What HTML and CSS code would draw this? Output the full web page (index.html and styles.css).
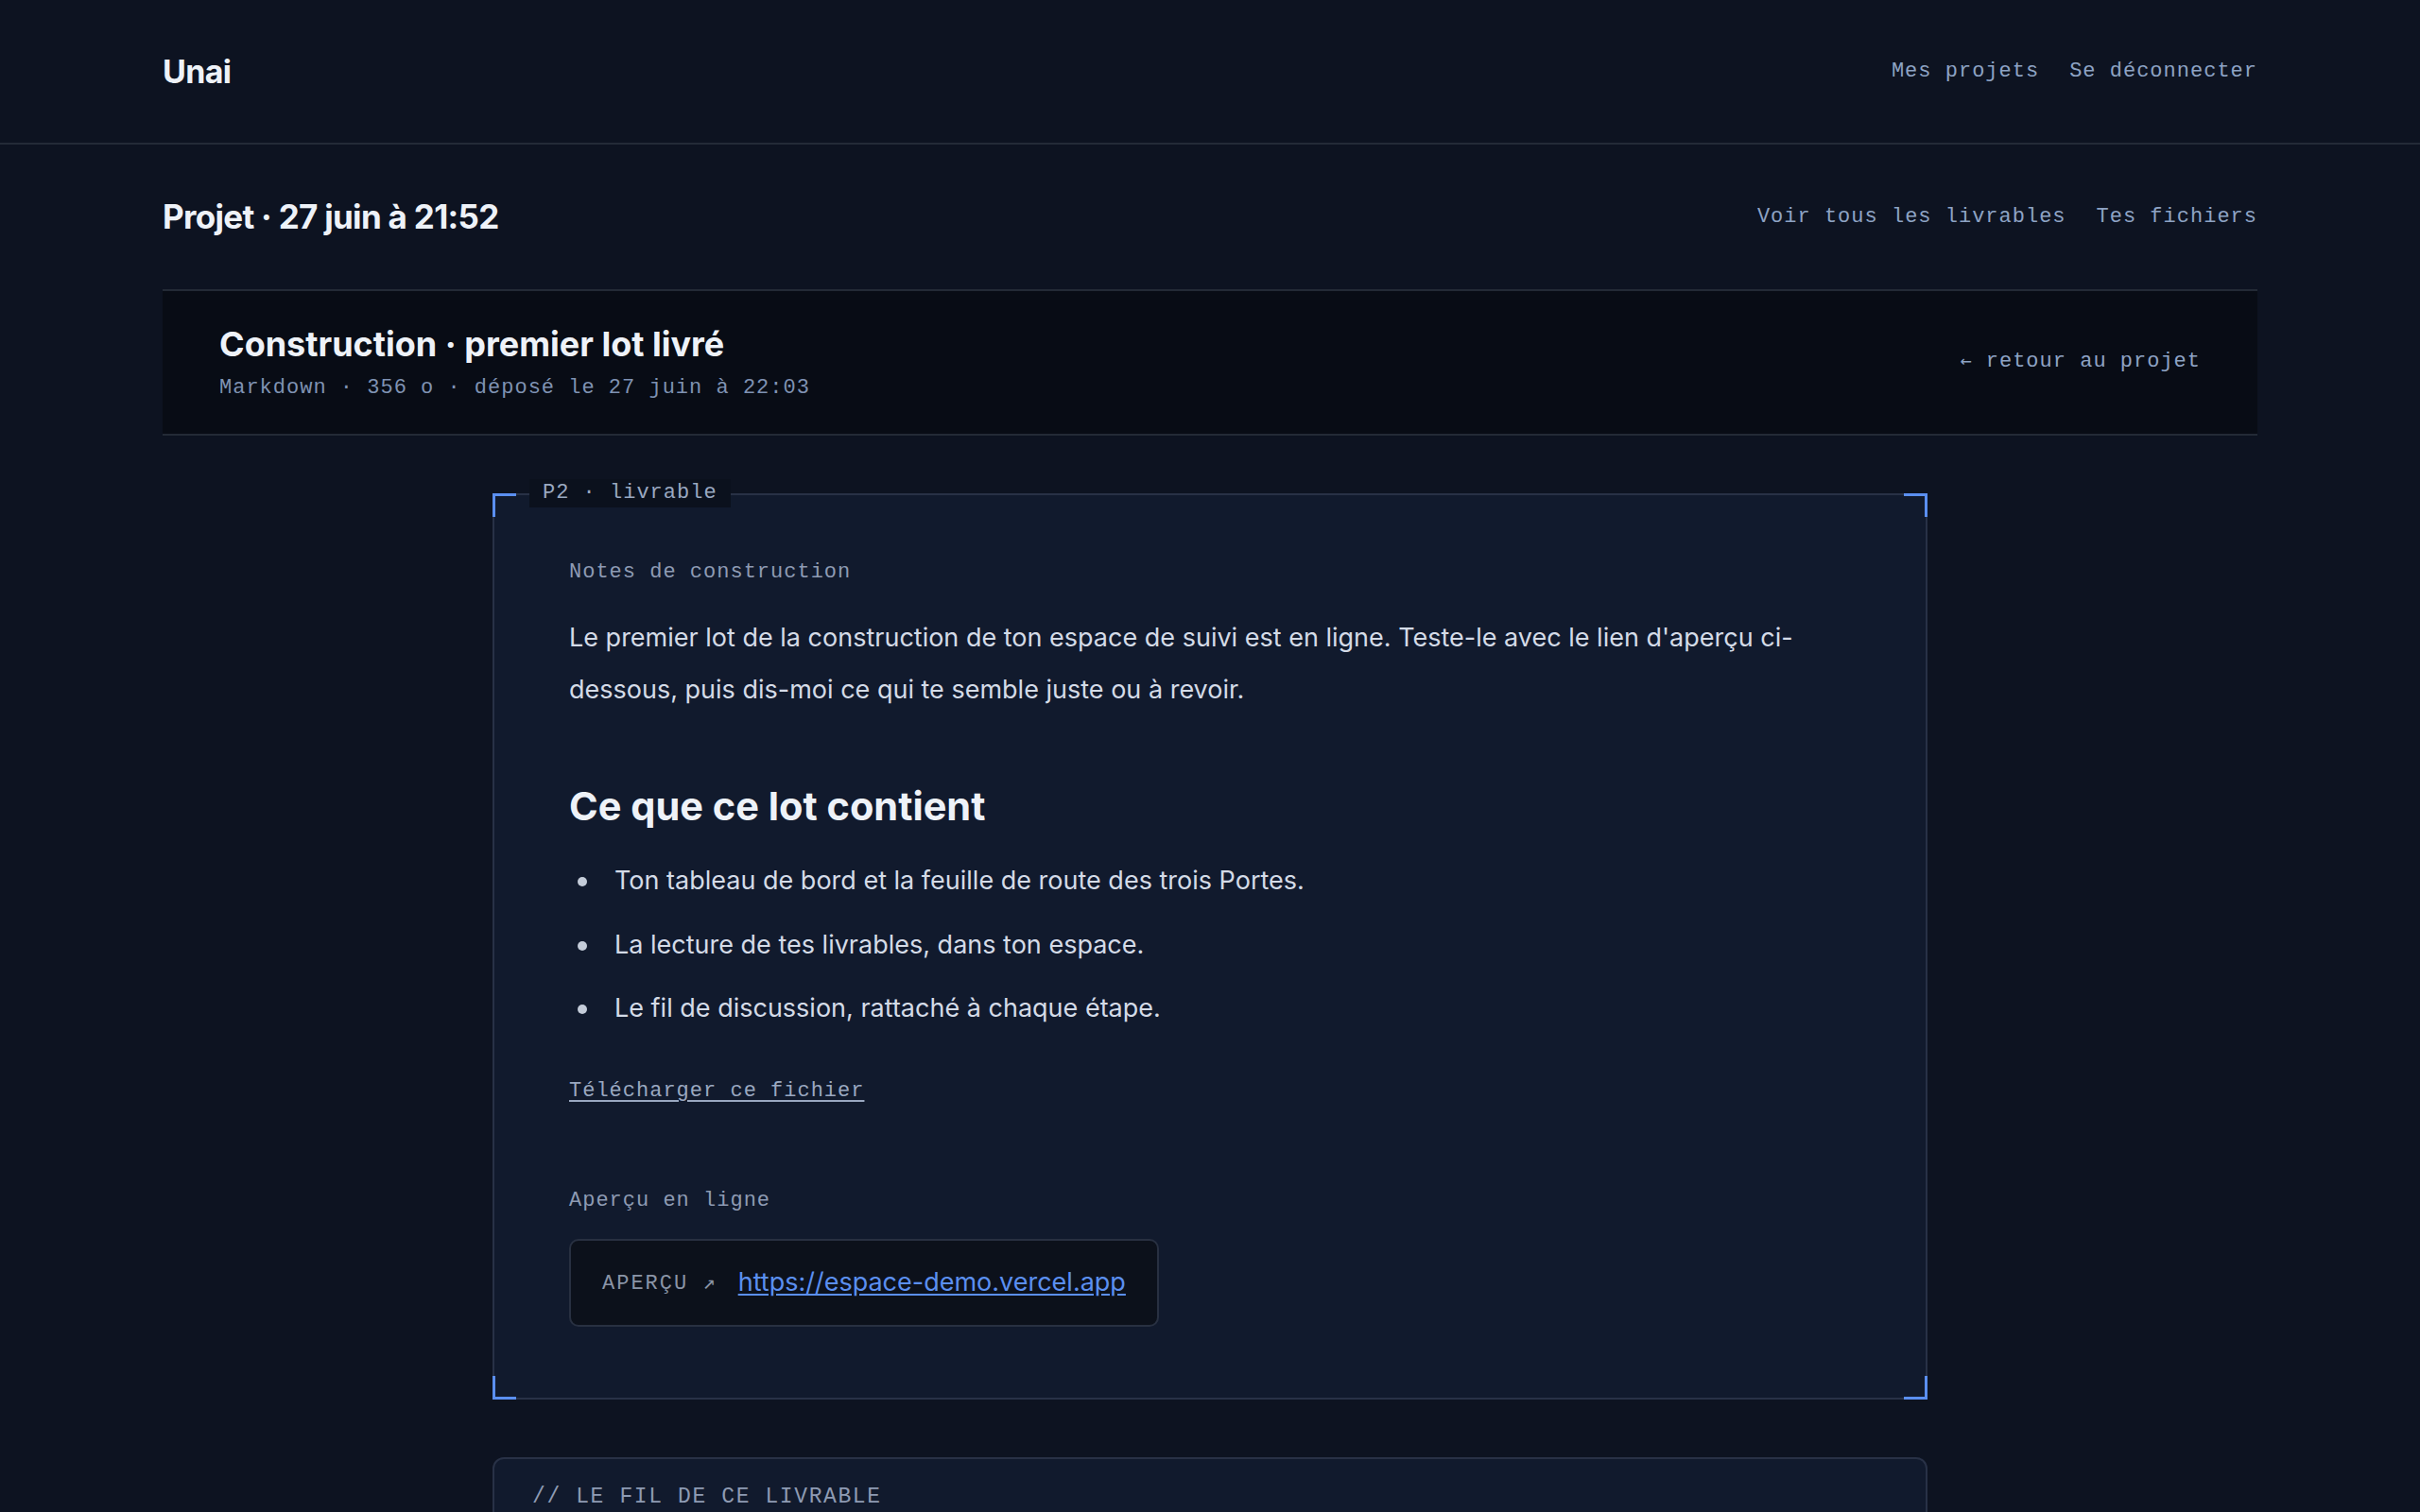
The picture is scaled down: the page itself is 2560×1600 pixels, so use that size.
FILE: index.html
```html
<!DOCTYPE html>
<html lang="fr">
<head>
  <meta charset="UTF-8">
  <meta name="viewport" content="width=device-width, initial-scale=1.0">
  <title>Construction · premier lot livré</title>
  <link rel="stylesheet" href="styles.css">
</head>
<body>
  <header class="site-header">
    <div class="wrap header-row">
      <a class="brand" href="#">Unai</a>
      <nav class="nav">
        <a href="#">Mes projets</a>
        <a href="#">Se déconnecter</a>
      </nav>
    </div>
  </header>

  <main class="wrap">
    <div class="page-head">
      <h1>Projet · 27 juin à 21:52</h1>
      <nav class="nav">
        <a href="#">Voir tous les livrables</a>
        <a href="#">Tes fichiers</a>
      </nav>
    </div>

    <section class="file-head">
      <div>
        <h2 class="file-title">Construction · premier lot livré</h2>
        <div class="file-meta">Markdown · 356 o · déposé le 27 juin à 22:03</div>
      </div>
      <a class="back-link" href="#"><span class="arrow">←</span> retour au projet</a>
    </section>

    <article class="doc-card">
      <span class="doc-tag">P2 · livrable</span>
      <span class="corner tl"></span>
      <span class="corner tr"></span>
      <span class="corner bl"></span>
      <span class="corner br"></span>

      <div class="mono-label">Notes de construction</div>
      <p class="doc-text">Le premier lot de la construction de ton espace de suivi est en ligne. Teste-le avec le lien d'aperçu ci-dessous, puis dis-moi ce qui te semble juste ou à revoir.</p>

      <h3 class="doc-heading">Ce que ce lot contient</h3>
      <ul class="doc-list">
        <li>Ton tableau de bord et la feuille de route des trois Portes.</li>
        <li>La lecture de tes livrables, dans ton espace.</li>
        <li>Le fil de discussion, rattaché à chaque étape.</li>
      </ul>

      <a class="download" href="#">Télécharger ce fichier</a>

      <div class="mono-label preview-label">Aperçu en ligne</div>
      <div class="preview-box">
        <span class="preview-tag">APERÇU ↗</span>
        <a class="preview-url" href="#">https://espace-demo.vercel.app</a>
      </div>
    </article>

    <section class="thread-card">
      <div class="thread-title">// LE FIL DE CE LIVRABLE</div>
    </section>
  </main>
</body>
</html>
```

FILE: styles.css
```css
body {
  margin: 0;
  background-color: #0d1321;
  color: #d4dbe7;
  font-family: Inter, 'Noto Sans', sans-serif;
}
a {
  color: inherit;
  text-decoration: none;
}
.wrap {
  max-width: 2216px;
  margin: 0 auto;
}

/* en-tête */
.site-header {
  border-bottom: 2px solid #232a37;
}
.header-row {
  display: flex;
  justify-content: space-between;
  align-items: center;
  padding: 54px 0 55px;
  height: 42px;
}
.brand {
  font-size: 34px;
  font-weight: 700;
  letter-spacing: -0.02em;
  color: #eef2f8;
}
.nav {
  display: flex;
  gap: 32px;
}
.nav a {
  font-family: 'Liberation Mono', monospace;
  font-size: 22px;
  letter-spacing: 1px;
  color: #8ea3c4;
}

.page-head {
  display: flex;
  justify-content: space-between;
  align-items: center;
  padding: 55px 0 56px;
  height: 42px;
}
h1 {
  margin: 0;
  font-size: 35px;
  font-weight: 700;
  letter-spacing: -0.02em;
  color: #eef2f8;
}

/* bloc fichier */
.file-head {
  display: flex;
  justify-content: space-between;
  align-items: center;
  background: #080c15;
  border-top: 2px solid #232a36;
  border-bottom: 2px solid #232a36;
  padding: 34px 60px 33px;
}
.file-title {
  margin: 0;
  font-size: 36px;
  line-height: 44px;
  font-weight: 700;
  color: #eef2f8;
}
.file-meta {
  margin-top: 10px;
  font-family: 'Liberation Mono', monospace;
  font-size: 22px;
  line-height: 30px;
  letter-spacing: 1px;
  color: #7f92b2;
}
.back-link {
  margin-bottom: 4px;
  font-family: 'Liberation Mono', monospace;
  font-size: 22px;
  letter-spacing: 1px;
  color: #8ea3c4;
}
.back-link .arrow {
  font-family: 'DejaVu Sans Mono', monospace;
  font-size: 20px;
}

/* carte du livrable */
.doc-card {
  position: relative;
  max-width: 1518px;
  box-sizing: border-box;
  margin: 61px auto 0;
  padding: 67px 79px 75px;
  background: #111a2d;
  border: 2px solid #283146;
  border-radius: 6px;
}
.doc-tag {
  position: absolute;
  top: -17px;
  left: 37px;
  padding: 0 14px;
  background: #0b111d;
  font-family: 'Liberation Mono', monospace;
  font-size: 22px;
  line-height: 30px;
  letter-spacing: 1px;
  color: #9aa8c0;
}
.corner {
  position: absolute;
  width: 22px;
  height: 22px;
  border: 0 solid #5b8ff0;
}
.corner.tl { top: -2px; left: -2px; border-top-width: 3px; border-left-width: 3px; }
.corner.tr { top: -2px; right: -2px; border-top-width: 3px; border-right-width: 3px; }
.corner.bl { bottom: -2px; left: -2px; border-bottom-width: 3px; border-left-width: 3px; }
.corner.br { bottom: -2px; right: -2px; border-bottom-width: 3px; border-right-width: 3px; }

.mono-label {
  font-family: 'Liberation Mono', monospace;
  font-size: 22px;
  line-height: 30px;
  letter-spacing: 1px;
  color: #8e9bb3;
}
.doc-text {
  margin: 26px 0 0;
  font-size: 27px;
  line-height: 55px;
}
.doc-heading {
  margin: 70px 0 0;
  font-size: 41.5px;
  line-height: 52px;
  font-weight: 700;
  color: #eef2f8;
}
.doc-list {
  margin: 25px 0 0;
  padding-left: 48px;
  list-style: none;
}
.doc-list li {
  position: relative;
  font-size: 27px;
  line-height: 55px;
  margin-bottom: 12.5px;
}
.doc-list li:last-child {
  margin-bottom: 0;
}
.doc-list li::before {
  content: "";
  position: absolute;
  left: -39px;
  top: 24px;
  width: 10px;
  height: 10px;
  border-radius: 50%;
  background: #c4ccd9;
}
.download {
  display: inline-block;
  margin-top: 46px;
  font-family: 'Liberation Mono', monospace;
  font-size: 22px;
  line-height: 30px;
  letter-spacing: 1px;
  color: #9aa8c0;
  text-decoration: underline;
  text-underline-offset: 4px;
}
.preview-label {
  margin-top: 86px;
}
.preview-box {
  display: inline-flex;
  align-items: center;
  gap: 22px;
  margin-top: 25px;
  padding: 29px 33px 30px;
  background: #0c111b;
  border: 2px solid #283041;
  border-radius: 10px;
}
.preview-tag {
  font-family: 'Liberation Mono', monospace;
  font-size: 22px;
  letter-spacing: 2px;
  color: #8a94a6;
}
.preview-url {
  font-size: 27px;
  line-height: 30px;
  color: #5b8ff0;
  text-decoration: underline;
  text-underline-offset: 3px;
}

/* fil de discussion */
.thread-card {
  max-width: 1518px;
  box-sizing: border-box;
  margin: 61px auto 40px;
  padding: 25px 40px 200px;
  background: #111a2d;
  border: 2px solid #283146;
  border-radius: 12px;
}
.thread-title {
  font-family: 'Liberation Mono', monospace;
  font-size: 23px;
  line-height: 30px;
  letter-spacing: 1.6px;
  color: #8e9bb3;
}
```
